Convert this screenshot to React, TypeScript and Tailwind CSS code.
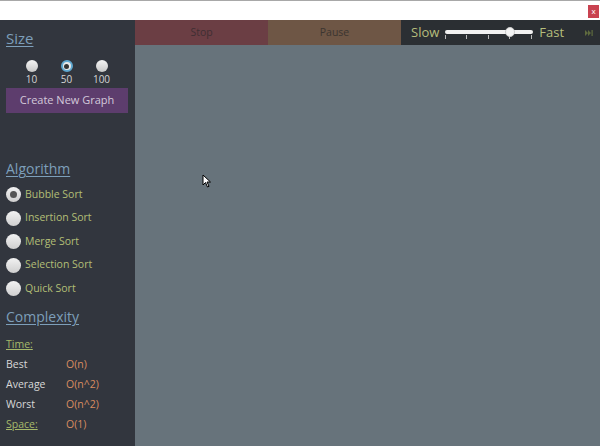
import React from "react";

const font = { fontFamily: '"Open Sans", "Noto Sans", sans-serif' };

function Radio({ checked }: { checked?: boolean }) {
  if (checked) {
    return (
      <span className="block w-[12px] h-[12px] rounded-full bg-[#e8e8e8] border-[2px] border-[#5fa8d0] flex items-center justify-center">
        <span className="block w-[5px] h-[5px] rounded-full bg-[#333]" />
      </span>
    );
  }
  return <span className="block w-[12px] h-[12px] rounded-full bg-gradient-to-b from-[#f4f4f4] to-[#c8c8c8]" />;
}

function AlgoRadio({ checked }: { checked?: boolean }) {
  return (
    <span className="block w-[15px] h-[15px] rounded-full bg-gradient-to-b from-[#f2f2f2] to-[#cfcfcf] flex items-center justify-center">
      {checked && <span className="block w-[7px] h-[7px] rounded-full bg-[#555]" />}
    </span>
  );
}

export default function App() {
  const algos = ["Bubble Sort", "Insertion Sort", "Merge Sort", "Selection Sort", "Quick Sort"];
  return (
    <div className="w-[600px] h-[446px] flex flex-col overflow-hidden bg-white" style={font}>
      <div className="h-[20px] border-t border-[#a8a8a8] bg-white flex justify-end items-start pt-[4px] pr-[1px]">
        <div className="w-[11px] h-[13px] bg-[#c94250] text-white text-[8px] leading-[12px] text-center">x</div>
      </div>
      <div className="flex flex-1">
        <div className="w-[135px] bg-[#32363e] flex flex-col px-[6px]">
          <div className="mt-[8px] text-[15px] leading-[20px] text-[#7d9fba] underline underline-offset-2">Size</div>
          <div className="flex mt-[12px] ml-[8px]">
            {[["10", false], ["50", true], ["100", false]].map(([l, c]) => (
              <div key={l as string} className="w-[35px] flex flex-col items-center">
                <Radio checked={c as boolean} />
                <span className="text-[10px] leading-[12px] mt-[1px] text-[#d5d5d5]">{l as string}</span>
              </div>
            ))}
          </div>
          <div className="mt-[3px] w-[122px] h-[25px] bg-[#5d3d6d] text-[#d3c9da] text-[11px] flex items-center justify-center">
            Create New Graph
          </div>
          <div className="mt-[46px] text-[14px] leading-[20px] text-[#7d9fba] underline underline-offset-2">Algorithm</div>
          <div className="flex flex-col mt-[8px] gap-[8.5px]">
            {algos.map((a, i) => (
              <div key={a} className="flex items-center gap-[4px] h-[15px]">
                <AlgoRadio checked={i === 0} />
                <span className="text-[10.5px] text-[#b3bf76]">{a}</span>
              </div>
            ))}
          </div>
          <div className="mt-[11px] text-[14px] leading-[20px] text-[#7d9fba] underline underline-offset-2">Complexity</div>
          <div className="mt-[10px] grid grid-cols-[60px_1fr] gap-y-[5px] text-[10.5px] leading-[15px]">
            <span className="text-[#a6b96a] underline">Time:</span>
            <span />
            <span className="text-[#d8d8d8]">Best</span>
            <span className="text-[#d98c60]">O(n)</span>
            <span className="text-[#d8d8d8]">Average</span>
            <span className="text-[#d98c60]">O(n^2)</span>
            <span className="text-[#d8d8d8]">Worst</span>
            <span className="text-[#d98c60]">O(n^2)</span>
            <span className="text-[#a6b96a] underline">Space:</span>
            <span className="text-[#d98c60]">O(1)</span>
          </div>
        </div>
        <div className="flex-1 bg-[#67737b] flex flex-col relative">
          <div className="h-[25px] flex">
            <div className="w-[133px] bg-[#6b3e44] flex items-center justify-center text-[10.5px] text-[#3f2e33]">Stop</div>
            <div className="w-[133px] bg-[#6e5645] flex items-center justify-center text-[10.5px] text-[#3c3530]">Pause</div>
            <div className="flex-1 bg-[#2b2f33] flex items-center pl-[10px]">
              <span className="text-[13px] text-[#b6be7c]">Slow</span>
              <div className="relative w-[88px] h-[14px] ml-[6px]">
                <div className="absolute left-0 right-0 top-[4px] h-[4px] bg-[#f2f2f2] rounded-[2px]" />
                {[0, 21, 43, 64, 86].map((x) => (
                  <div key={x} className="absolute top-[9px] w-[1px] h-[4px] bg-[#bbbbbb]" style={{ left: x }} />
                ))}
                <div className="absolute top-[1px] left-[60px] w-[10px] h-[10px] rounded-full bg-[#f4f4f4] border border-[#ccc]" />
              </div>
              <span className="ml-[6px] text-[13px] text-[#b6be7c]">Fast</span>
              <svg className="ml-auto mr-[7px]" width="8" height="6" viewBox="0 0 8 6">
                <path d="M0 0 L3 3 L0 6 Z M3 0 L6 3 L3 6 Z" fill="#5f6b3e" />
                <rect x="6.5" y="0" width="1.2" height="6" fill="#5f6b3e" />
              </svg>
            </div>
          </div>
          <svg className="absolute left-[67px] top-[154px]" width="10" height="14" viewBox="0 0 10 14">
            <path d="M1 1 L1 11 L3.5 8.5 L5.5 13 L7 12.3 L5 8 L8.5 8 Z" fill="#fff" stroke="#000" strokeWidth="1" />
          </svg>
        </div>
      </div>
    </div>
  );
}
